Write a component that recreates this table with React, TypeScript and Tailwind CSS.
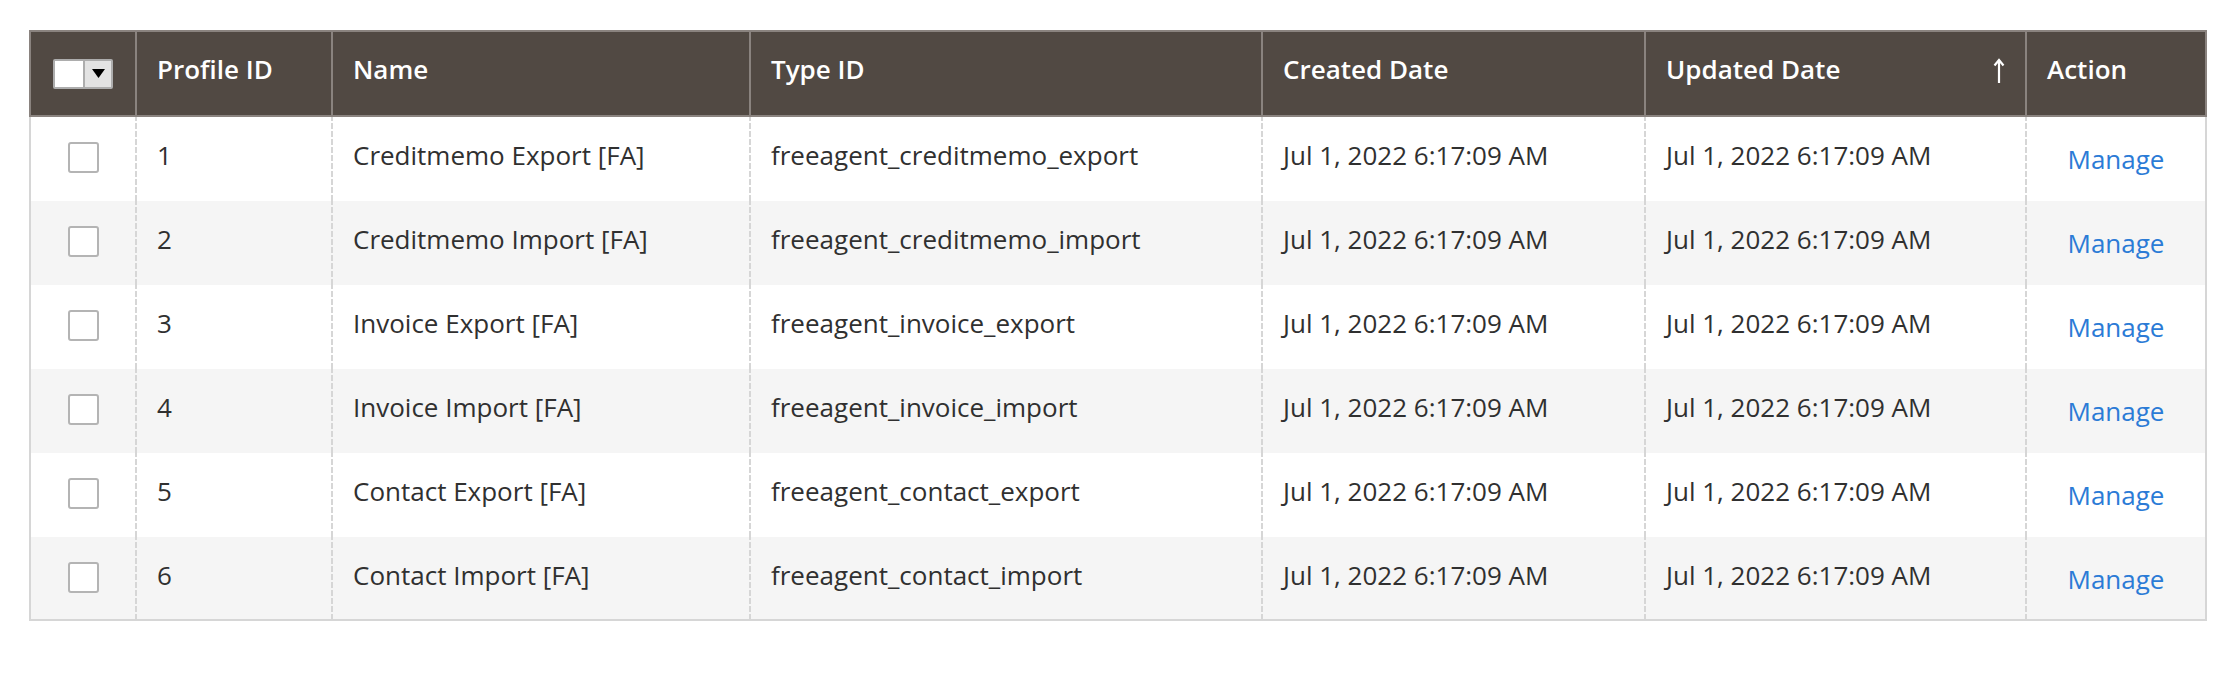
import React from "react";

type Profile = {
  id: number;
  name: string;
  typeId: string;
  created: string;
  updated: string;
};

const profiles: Profile[] = [
  { id: 1, name: "Creditmemo Export [FA]", typeId: "freeagent_creditmemo_export", created: "Jul 1, 2022 6:17:09 AM", updated: "Jul 1, 2022 6:17:09 AM" },
  { id: 2, name: "Creditmemo Import [FA]", typeId: "freeagent_creditmemo_import", created: "Jul 1, 2022 6:17:09 AM", updated: "Jul 1, 2022 6:17:09 AM" },
  { id: 3, name: "Invoice Export [FA]", typeId: "freeagent_invoice_export", created: "Jul 1, 2022 6:17:09 AM", updated: "Jul 1, 2022 6:17:09 AM" },
  { id: 4, name: "Invoice Import [FA]", typeId: "freeagent_invoice_import", created: "Jul 1, 2022 6:17:09 AM", updated: "Jul 1, 2022 6:17:09 AM" },
  { id: 5, name: "Contact Export [FA]", typeId: "freeagent_contact_export", created: "Jul 1, 2022 6:17:09 AM", updated: "Jul 1, 2022 6:17:09 AM" },
  { id: 6, name: "Contact Import [FA]", typeId: "freeagent_contact_import", created: "Jul 1, 2022 6:17:09 AM", updated: "Jul 1, 2022 6:17:09 AM" },
];

const cols = "grid grid-cols-[104px_196px_418px_512px_383px_381px_180px]";

// dashed vertical divider drawn as a background strip on the left of each body cell
const dashed = "bg-[linear-gradient(#d6d6d6_75%,transparent_75%)] bg-[length:2px_8px] bg-left bg-repeat-y";

const MassSelect = () => (
  <div className="flex h-[30px] w-[60px] overflow-hidden rounded-[2px] border-2 border-[#adadad]">
    <span className="w-[28px] bg-white" />
    <span className="flex flex-1 items-center justify-center border-l-2 border-[#adadad] bg-[#e3e3e3]">
      <svg width="13" height="9" viewBox="0 0 13 9">
        <polygon points="0,0 13,0 6.5,9" fill="#000" />
      </svg>
    </span>
  </div>
);

const SortArrow = () => (
  <svg width="12" height="25" viewBox="0 0 12 25" fill="none" stroke="#fff" strokeWidth="2.2">
    <path d="M6 25V2" />
    <path d="M1.5 7.5L6 2l4.5 5.5" />
  </svg>
);

export default function App() {
  return (
    <div className="min-h-[688px] bg-white pl-[29px] pt-[30px] font-['Open_Sans',sans-serif] text-[26px] leading-[36px] text-[#303030]">
      <div className="w-[2178px]">
        {/* Header */}
        <div className={`${cols} h-[87px] border-2 border-[#8a837f] bg-[#514943] font-semibold text-white`}>
          <div className="flex items-center justify-center">
            <MassSelect />
          </div>
          <div className="border-l-2 border-[#8a837f] pl-[20px] pt-[19px]">Profile ID</div>
          <div className="border-l-2 border-[#8a837f] pl-[20px] pt-[19px]">Name</div>
          <div className="border-l-2 border-[#8a837f] pl-[20px] pt-[19px]">Type ID</div>
          <div className="border-l-2 border-[#8a837f] pl-[20px] pt-[19px]">Created Date</div>
          <div className="flex justify-between border-l-2 border-[#8a837f] pl-[20px] pr-[20px] pt-[19px]">
            <span>Updated Date</span>
            <span className="pt-[7px]">
              <SortArrow />
            </span>
          </div>
          <div className="border-l-2 border-[#8a837f] pl-[20px] pt-[19px]">Action</div>
        </div>

        {/* Rows */}
        {profiles.map((p, i) => (
          <div
            key={p.id}
            className={`${cols} h-[84px] border-x-2 border-[#d6d6d6] ${i % 2 === 1 ? "bg-[#f5f5f5]" : "bg-white"} ${
              i === profiles.length - 1 ? "border-b-2" : ""
            }`}
          >
            <div className="flex justify-center pt-[25px]">
              <span className="block h-[31px] w-[31px] rounded-[3px] border-2 border-[#b4b4b4] bg-white" />
            </div>
            <div className={`${dashed} pl-[22px] pt-[20px]`}>{p.id}</div>
            <div className={`${dashed} pl-[22px] pt-[20px]`}>{p.name}</div>
            <div className={`${dashed} pl-[22px] pt-[20px]`}>{p.typeId}</div>
            <div className={`${dashed} pl-[22px] pt-[20px]`}>{p.created}</div>
            <div className={`${dashed} pl-[22px] pt-[20px]`}>{p.updated}</div>
            <div className={`${dashed} pt-[24px] text-center`}>
              <a href="#" className="pl-[2px] text-[#2b7bd6]">
                Manage
              </a>
            </div>
          </div>
        ))}
      </div>
    </div>
  );
}
